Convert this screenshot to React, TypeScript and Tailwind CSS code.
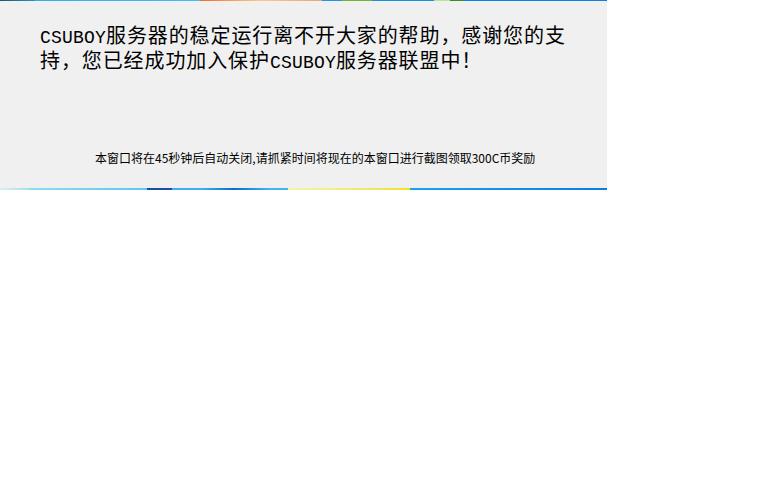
import React from "react";

const cjk = { fontFamily: '"Noto Sans CJK SC", "Noto Sans", sans-serif' };

function Latin({ children }: { children: React.ReactNode }) {
  return (
    <span className="text-[18px] tracking-[0.2px]" style={{ fontFamily: '"Liberation Mono", monospace' }}>
      {children}
    </span>
  );
}

export default function App() {
  return (
    <div className="w-[768px] h-[480px] bg-white">
      <div className="w-[607px] flex flex-col">
        {/* top strip */}
        <div className="flex h-px">
          <div className="w-[35px] bg-gradient-to-r from-[#1a5670] to-[#2d94bb]" />
          <div className="w-[165px] bg-gradient-to-r from-[#35aee6] to-[#45bcef]" />
          <div className="w-[122px] bg-gradient-to-r from-[#f26a1b] via-[#fdc784] to-[#f5a06a]" />
          <div className="w-[20px] bg-[#1e96e6]" />
          <div className="w-[30px] bg-[#6cb52e]" />
          <div className="w-[62px] bg-[#1a8fe2]" />
          <div className="w-[16px] bg-[#b8e68e]" />
          <div className="w-[14px] bg-[#3c8c1e]" />
          <div className="flex-1 bg-[#0d7fdf]" />
        </div>
        {/* body */}
        <div className="h-[187px] bg-[#f0f0f0] flex flex-col text-black" style={cjk}>
          <div className="pl-[40px] pt-[23px] w-[578px] text-[20px] leading-[22px] tracking-[0.9px] [text-spacing-trim:space-all]">
            <Latin>CSUBOY</Latin>服务器的稳定运行离不开大家的帮助，感谢您的支持，您已经成功加入保护<Latin>CSUBOY</Latin>服务器联盟中！
          </div>
          <div className="mt-auto mb-[22px] pl-[95px] text-[12px] leading-[16px]">
            本窗口将在45秒钟后自动关闭,请抓紧时间将现在的本窗口进行截图领取300C币奖励
          </div>
        </div>
        {/* bottom strip */}
        <div className="flex h-[2px]">
          <div className="w-[30px] bg-gradient-to-r from-[#d8eef2] to-[#9ee0f4]" />
          <div className="w-[117px] bg-gradient-to-r from-[#8adcf3] to-[#5cc8ef]" />
          <div className="w-[25px] bg-[#1b4ea0]" />
          <div className="w-[28px] bg-[#3ab0ec]" />
          <div className="w-[68px] bg-gradient-to-r from-[#3cb6f0] via-[#0b6cc8] to-[#3cb5f0]" />
          <div className="w-[20px] bg-[#3fb8f2]" />
          <div className="w-[122px] bg-gradient-to-r from-[#f6f3a8] to-[#f2e020]" />
          <div className="flex-1 bg-gradient-to-r from-[#1aa3f2] to-[#0c7de0]" />
        </div>
      </div>
    </div>
  );
}
